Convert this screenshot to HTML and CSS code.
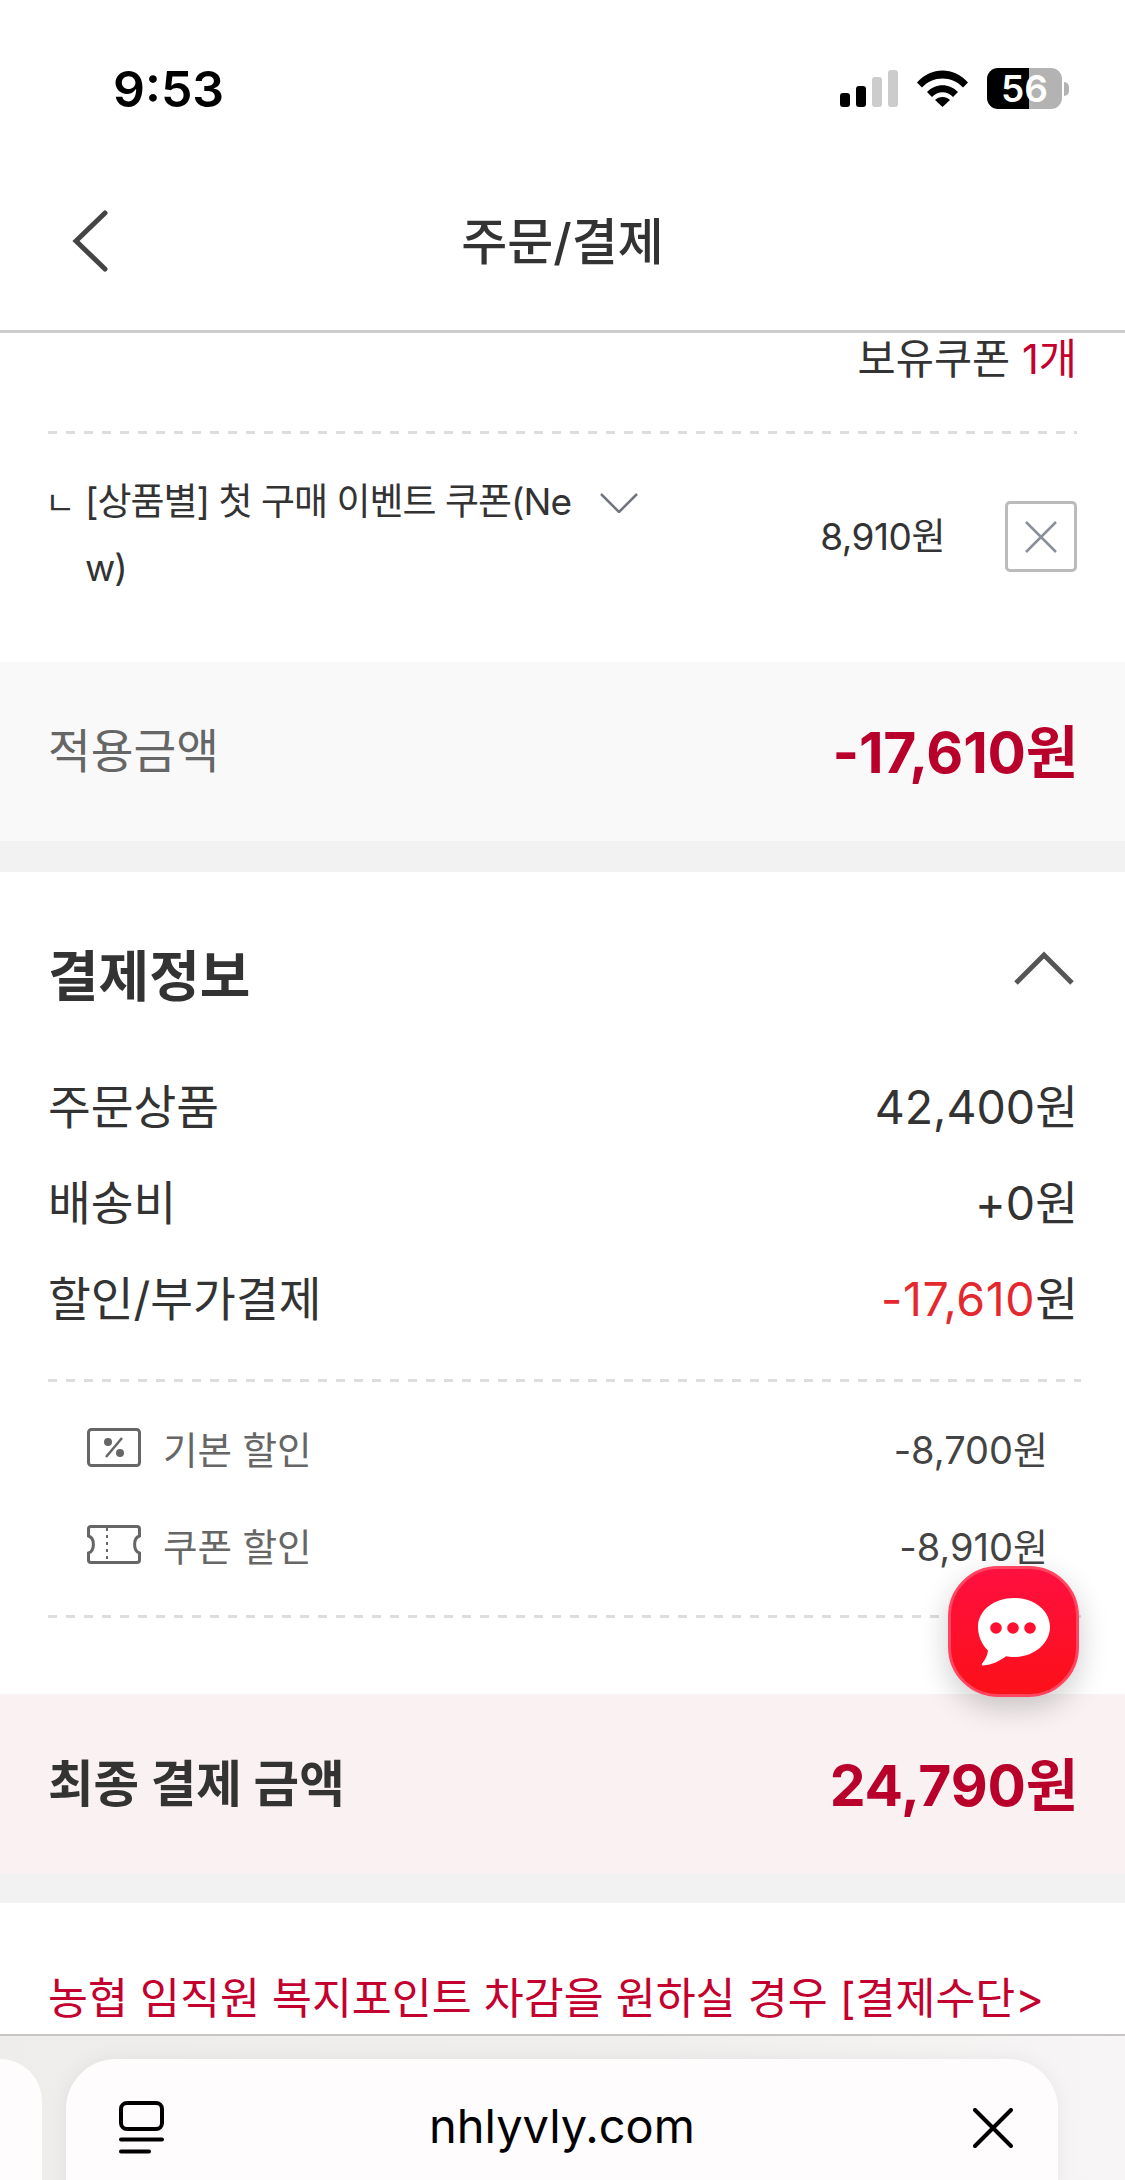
FILE: index.html
```html
<!DOCTYPE html>
<html lang="ko">
<head>
  <meta charset="UTF-8" />
  <meta name="viewport" content="width=device-width, initial-scale=1.0"/>
  <title>주문/결제</title>
  <link rel="stylesheet" href="styles.css">
</head>
<body>

<div class="screen">
  <div class="header">
    <div class="status-bar">
      <span class="clock">9:53</span>
      <div class="status-icons">
        <div class="signal">
          <i class="bar1"></i><i class="bar2"></i><i class="bar3"></i><i class="bar4"></i>
        </div>
        <svg class="wifi" width="51" height="37" viewBox="0 0 51 37">
          <path d="M0 12.5C14-3.5 37-3.5 51 12.5L46 17.5C35 5.5 16 5.5 5 17.5Z" />
          <path d="M10 22C18.500 13 32.500 13 41 22L36 27C30.500 20.500 20.500 20.500 15 27Z" />
          <path d="M25.500 37L18 30C22 26 29 26 33 30Z" />
        </svg>
        <div class="battery">
          <div class="battery-body"><span>56</span></div>
          <div class="battery-nub"></div>
        </div>
      </div>
    </div>
    <div class="title-bar">
      <svg class="back" width="40" height="64" viewBox="0 0 40 64">
        <path d="M35 4L6 32L35 60" />
      </svg>
      <h1>주문/결제</h1>
    </div>
  </div>

  <div class="content">
    <!-- 쿠폰 -->
    <div class="coupon-section">
      <div class="coupon-count">보유쿠폰 <em>1개</em></div>
      <div class="dash-line"></div>
      <div class="coupon-row">
        <span class="corner">ㄴ</span>
        <div class="coupon-name">[상품별] 첫 구매 이벤트 쿠폰(New)</div>
        <svg class="coupon-arrow" width="38" height="20" viewBox="0 0 38 20">
          <path d="M1 1L19 19L37 1" />
        </svg>
        <div class="coupon-price">8,910원</div>
        <div class="coupon-del">
          <svg width="34" height="34" viewBox="0 0 34 34"><path d="M2 2L32 32M32 2L2 32" /></svg>
        </div>
      </div>
    </div>

    <div class="applied">
      <span class="applied-label">적용금액</span>
      <span class="big-price">-17,610원</span>
    </div>

    <!-- 결제정보 -->
    <div class="pay-section">
      <div class="pay-head">
        <h2>결제정보</h2>
        <svg class="fold" width="60" height="34" viewBox="0 0 60 34">
          <path d="M2 32L30 4L58 32" />
        </svg>
      </div>
      <div class="pay-row"><span>주문상품</span><span>42,400원</span></div>
      <div class="pay-row"><span>배송비</span><span>+0원</span></div>
      <div class="pay-row"><span>할인/부가결제</span><span><em>-17,610</em>원</span></div>
      <div class="dash-line pay-dash"></div>
      <div class="sub-row">
        <svg class="sub-icon" width="54" height="39" viewBox="0 0 54 39">
          <rect x="1.500" y="1.500" width="51" height="36" rx="3" />
          <path class="thin" d="M19 29L35 10" />
          <circle cx="21" cy="14" r="4" />
          <circle cx="33" cy="25" r="4" />
        </svg>
        <span class="sub-label">기본 할인</span>
        <span class="sub-value">-8,700원</span>
      </div>
      <div class="sub-row">
        <svg class="sub-icon" width="54" height="39" viewBox="0 0 54 39">
          <path d="M4 1.500H50C51.500 1.500 52.500 2.500 52.500 4V11C46 13 46 26 52.500 28V35C52.500 36.500 51.500 37.500 50 37.500H4C2.500 37.500 1.500 36.500 1.500 35V28C8 26 8 13 1.500 11V4C1.500 2.500 2.500 1.500 4 1.500Z" />
          <path class="dots" d="M20 3V37" />
        </svg>
        <span class="sub-label">쿠폰 할인</span>
        <span class="sub-value">-8,910원</span>
      </div>
      <div class="dash-line sub-dash"></div>
    </div>

    <div class="final">
      <span class="final-label">최종 결제 금액</span>
      <span class="big-price">24,790원</span>
    </div>

    <div class="notice">농협 임직원 복지포인트 차감을 원하실 경우 [결제수단&gt;</div>
  </div>

  <!-- 브라우저 하단 탭 -->
  <div class="browser-bar">
    <div class="tab-prev"></div>
    <div class="tab-main">
      <svg class="tabs-icon" width="45" height="53" viewBox="0 0 45 53">
        <rect x="2" y="2" width="41" height="26" rx="6" />
        <path d="M2 38.500H43M2 50.500H30" />
      </svg>
      <span class="url">nhlyvly.com</span>
      <svg class="close-icon" width="40" height="40" viewBox="0 0 40 40">
        <path d="M2 2L38 38M38 2L2 38" />
      </svg>
    </div>
  </div>

  <div class="chat-btn">
    <svg width="74" height="68" viewBox="0 0 74 68">
      <path d="M37 0C57 0 73 12.500 73 29C73 45.500 57 59 37 59C34 59 31 58.700 29 58.300C23 63 15 67 6 67.500C4.500 67.500 4.500 66 5.500 65C8 62 10.500 57.500 11 52.500C5 47 1 38 1 29C1 12.500 17 0 37 0Z" fill="#fff" />
      <circle cx="19" cy="30" r="5.800" fill="#fe1030" />
      <circle cx="36" cy="30" r="5.800" fill="#fe1030" />
      <circle cx="53" cy="30" r="5.800" fill="#fe1030" />
    </svg>
  </div>
</div>

</body>
</html>
```

FILE: styles.css
```css
/* 기본 스타일 */
* {
  box-sizing: border-box;
}

body {
  margin: 0;
  font-family: 'Inter', 'Noto Sans CJK KR', sans-serif;
  background-color: #fff;
  color: #333;
}

h1, h2 {
  margin: 0;
}

em {
  font-style: normal;
}

.screen {
  width: 1125px;
  height: 2180px;
  display: flex;
  flex-direction: column;
  overflow: hidden;
  position: relative;
}

/* 상단 */
.header {
  height: 333px;
  flex-shrink: 0;
  border-bottom: 3px solid #ccc;
}

.status-bar {
  height: 170px;
  display: flex;
  justify-content: space-between;
  align-items: flex-start;
  padding: 59px 56px 0 113px;
}

.clock {
  font-size: 50px;
  line-height: 60px;
  font-weight: 600;
  color: #000;
}

.status-icons {
  display: flex;
  align-items: center;
  margin-top: 9px;
}

.signal {
  display: flex;
  align-items: flex-end;
  gap: 6px;
  height: 37px;
}

.signal i {
  width: 10px;
  border-radius: 3px;
  background: #000;
}

.signal .bar1 { height: 14px; }
.signal .bar2 { height: 21px; }
.signal .bar3 { height: 30px; background: #ccc; }
.signal .bar4 { height: 37px; background: #ccc; }

.wifi {
  margin-left: 19px;
  fill: #000;
}

.battery {
  margin-left: 19px;
  display: flex;
  align-items: center;
  gap: 2px;
}

.battery-body {
  width: 75px;
  height: 41px;
  border-radius: 11px;
  background: linear-gradient(to right, #000 0, #000 56%, #b3b3b3 56%);
  display: flex;
  align-items: center;
  justify-content: center;
  color: #fff;
  font-size: 37px;
  font-weight: 600;
}

.battery-nub {
  width: 5px;
  height: 14px;
  background: #b3b3b3;
  border-radius: 0 5px 5px 0;
}

.title-bar {
  height: 137px;
  position: relative;
  display: flex;
  align-items: center;
  justify-content: center;
}

.back {
  position: absolute;
  left: 70px;
  top: 39px;
}

.back path {
  fill: none;
  stroke: #444;
  stroke-width: 5;
  stroke-linecap: round;
}

.title-bar h1 {
  font-size: 50px;
  font-weight: 500;
  color: #333;
  margin-top: -2px;
}

/* 쿠폰 */
.content {
  flex: 1;
  overflow: hidden;
}

.dash-line {
  height: 3px;
  background: repeating-linear-gradient(to right, #ddd 0, #ddd 9px, transparent 9px, transparent 18px);
}

.coupon-section {
  height: 329px;
  padding: 0 48px;
}

.coupon-count {
  height: 98px;
  padding-top: 1px;
  text-align: right;
  font-size: 41.500px;
  line-height: 50px;
}

.coupon-count em {
  color: #c4002f;
}

.coupon-row {
  display: flex;
  align-items: flex-start;
  padding-top: 35px;
}

.corner {
  width: 40px;
  margin-left: -3px;
  font-size: 33px;
  line-height: 68px;
}

.coupon-name {
  width: 492px;
  font-size: 37px;
  line-height: 66px;
  letter-spacing: -1px;
  word-break: break-all;
  line-break: anywhere;
}

.coupon-arrow {
  margin: 24px 0 0 23px;
}

.coupon-arrow path {
  fill: none;
  stroke: #70747f;
  stroke-width: 2.500;
}

.coupon-price {
  margin: 34px 0 0 auto;
  font-size: 37px;
  line-height: 67px;
  letter-spacing: -0.5px;
}

.coupon-del {
  width: 72px;
  height: 71px;
  margin: 32px 0 0 60px;
  border: 3px solid #bbb;
  border-radius: 5px;
  display: flex;
  align-items: center;
  justify-content: center;
}

.coupon-del path {
  fill: none;
  stroke: #8a8f9c;
  stroke-width: 2.500;
}

/* 적용금액 */
.applied {
  height: 179px;
  background: #faf9fa;
  display: flex;
  align-items: center;
  justify-content: space-between;
  padding: 0 47px 8px 48px;
}

.applied-label {
  font-size: 46.500px;
  color: #666;
}

.big-price {
  font-size: 57px;
  font-weight: 700;
  color: #b8002b;
  letter-spacing: -0.2px;
}

/* 결제정보 */
.pay-section {
  height: 822px;
  margin-top: 31px;
  padding: 0 47px 0 48px;
  box-shadow: 0 -31px 0 0 #f2f2f2;
}

.pay-head {
  height: 183px;
  display: flex;
  align-items: center;
  justify-content: space-between;
  padding-top: 17px;
}

.pay-head h2 {
  font-size: 55px;
  font-weight: 700;
}

.fold {
  margin: -8px 4px 0 0;
}

.fold path {
  fill: none;
  stroke: #555;
  stroke-width: 5;
}

.pay-row {
  height: 96px;
  display: flex;
  align-items: center;
  justify-content: space-between;
  font-size: 46.500px;
}

.pay-row em {
  color: #e5282d;
  letter-spacing: 0.6px;
}

.pay-dash {
  margin-top: 36px;
  margin-right: -3px;
}

.sub-row {
  height: 97px;
  display: flex;
  align-items: center;
  padding: 0 30px 0 39px;
}

.pay-dash + .sub-row {
  margin-top: 17px;
}

.sub-icon {
  flex-shrink: 0;
  fill: none;
  stroke: #666;
  stroke-width: 3;
}

.sub-icon circle {
  fill: #666;
  stroke: none;
}

.sub-icon .thin {
  stroke-width: 2.500;
}

.sub-icon .dots {
  stroke-width: 2;
  stroke-dasharray: 3 4;
}

.sub-label {
  margin-left: 22px;
  font-size: 37.500px;
  color: #666;
}

.sub-value {
  margin-left: auto;
  font-size: 38px;
  color: #444;
}

.sub-dash {
  margin-top: 22px;
  margin-right: -3px;
}

/* 최종 결제 금액 */
.final {
  height: 179px;
  background: #f9f1f2;
  display: flex;
  align-items: center;
  justify-content: space-between;
  padding: 0 47px 6px 48px;
  margin-bottom: 30px;
  box-shadow: 0 30px 0 0 #f2f2f2;
}

.final-label {
  font-size: 49.500px;
  font-weight: 700;
}

.notice {
  padding: 65px 48px 0;
  font-size: 43.400px;
  line-height: 60px;
  color: #c4002f;
  white-space: nowrap;
}

/* 브라우저 바 */
.browser-bar {
  height: 146px;
  flex-shrink: 0;
  display: flex;
  align-items: flex-start;
  padding-top: 23px;
  border-top: 2px solid #c8c4c4;
  background: linear-gradient(to right, #efecec, #f1eeee 60%, #f7f5f5);
  overflow: hidden;
}

.tab-prev {
  width: 42px;
  height: 140px;
  background: #fefcfd;
  border-radius: 0 50px 0 0;
}

.tab-main {
  width: 992px;
  height: 140px;
  margin-left: 24px;
  background: #fefcfd;
  border-radius: 50px 50px 0 0;
  box-shadow: 0 0 20px rgba(0,0,0,0.06);
  position: relative;
  display: flex;
  justify-content: center;
  padding-top: 36px;
}

.url {
  font-size: 47px;
  line-height: 62px;
  color: #000;
}

.tabs-icon {
  position: absolute;
  left: 53px;
  top: 42px;
  fill: none;
  stroke: #000;
  stroke-width: 4;
  stroke-linecap: round;
}

.close-icon {
  position: absolute;
  left: 907px;
  top: 49px;
  fill: none;
  stroke: #000;
  stroke-width: 4;
  stroke-linecap: round;
}

/* 채팅 버튼 */
.chat-btn {
  position: absolute;
  left: 948px;
  top: 1566px;
  width: 131px;
  height: 131px;
  border-radius: 50px;
  border: 3px solid #ff4560;
  background: linear-gradient(to bottom, #fe1040, #fc1018);
  box-shadow: 0 10px 30px rgba(0,0,0,0.2);
  display: flex;
  align-items: center;
  justify-content: center;
}
```
